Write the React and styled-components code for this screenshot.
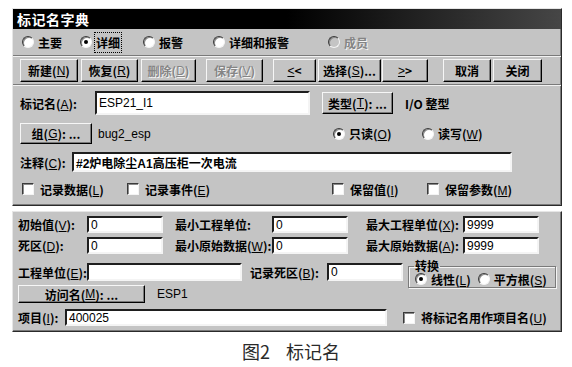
import React from 'react';
import styled, { createGlobalStyle } from 'styled-components';

const GlobalStyle = createGlobalStyle`
  html, body {
    margin: 0;
    padding: 0;
    background: #ffffff;
  }
  body {
    font-family: "Liberation Sans", "Noto Sans CJK SC", sans-serif;
    font-size: 12px;
    color: #000;
  }
`;

const Page = styled.div`
  width: 572px;
  height: 367px;
  padding: 8px 0 0 12px;
  box-sizing: border-box;
  overflow: hidden;
`;

const Panel = styled.div`
  width: 550px;
  box-sizing: border-box;
  background: #c4c4c4;
  border: 1px solid;
  border-color: #e6e6e6 #2a2a2a #2a2a2a #e6e6e6;
  box-shadow: inset -1px -1px #7a7a7a;
  padding-bottom: ${p => p.$pb || 0}px;
  margin-top: ${p => p.$mt || 0}px;
`;

const TitleBar = styled.div`
  height: 20px;
  display: flex;
  align-items: center;
  padding-left: 4px;
  background: linear-gradient(90deg, #000 0%, #000 50%, #464646 100%);
  color: #fff;
  font-family: "Noto Sans CJK SC", sans-serif;
  font-weight: 700;
  font-size: 14px;
  letter-spacing: 0.5px;
`;

const Row = styled.div`
  display: flex;
  align-items: center;
  height: ${p => p.$h}px;
  margin-top: ${p => p.$mt || 0}px;
  padding-left: ${p => p.$pl || 0}px;
`;

const Separator = styled.div`
  height: 0;
  border-top: 1px solid #7a7a7a;
  border-bottom: 1px solid #f2f2f2;
  margin-top: ${p => p.$mt || 0}px;
`;

const Text = styled.span`
  display: inline-block;
  flex-shrink: 0;
  white-space: nowrap;
  width: ${p => (p.$w ? `${p.$w}px` : 'auto')};
  margin-left: ${p => p.$ml || 0}px;
  font-family: ${p => (p.$latin ? '"Liberation Sans", sans-serif' : '"Noto Sans CJK SC", sans-serif')};
  font-weight: ${p => (p.$latin ? 400 : 700)};
  font-size: 12px;
  color: ${p => (p.$disabled ? '#858585' : '#000')};
  text-shadow: ${p => (p.$disabled ? '1px 1px #f4f4f4' : 'none')};
  outline: ${p => (p.$focus ? '1px dotted #000' : 'none')};
  outline-offset: 1px;

  u {
    font-family: "Liberation Sans", sans-serif;
    font-weight: 400;
  }
`;

const Input = styled.div`
  flex-shrink: 0;
  display: flex;
  align-items: center;
  box-sizing: border-box;
  width: ${p => p.$w}px;
  height: ${p => p.$h || 18}px;
  margin-left: ${p => p.$ml || 0}px;
  padding-left: 2px;
  background: #fff;
  border: 2px solid;
  border-color: #1e1e1e #f4f4f4 #f4f4f4 #1e1e1e;
  font-family: "Liberation Sans", "Noto Sans CJK SC", sans-serif;
  font-weight: ${p => (p.$cjk ? 700 : 400)};
  font-size: 12px;
  white-space: nowrap;
  overflow: hidden;
`;

const Button = styled.div`
  flex-shrink: 0;
  display: flex;
  align-items: center;
  justify-content: center;
  box-sizing: border-box;
  width: ${p => p.$w}px;
  height: ${p => p.$h || 23}px;
  margin-left: ${p => p.$ml || 0}px;
  background: #c4c4c4;
  border: 1px solid;
  border-color: #f6f6f6 #000 #000 #f6f6f6;
  box-shadow: inset -1px -1px #7a7a7a;
  font-family: "Noto Sans CJK SC", sans-serif;
  font-weight: 700;
  font-size: 12px;
  white-space: nowrap;
  color: ${p => (p.$disabled ? '#858585' : '#000')};
  text-shadow: ${p => (p.$disabled ? '1px 1px #f4f4f4' : 'none')};

  u {
    font-family: "Liberation Sans", sans-serif;
    font-weight: 400;
  }
`;

const Circle = styled.span`
  position: relative;
  flex-shrink: 0;
  width: 12px;
  height: 12px;
  box-sizing: border-box;
  border-radius: 50%;
  border: 1px solid;
  border-color: #3a3a3a #f4f4f4 #f4f4f4 #3a3a3a;
  background: ${p => (p.$disabled ? '#c4c4c4' : '#fff')};
  box-shadow: inset 1px 1px #8a8a8a;
  margin-right: 4px;

  &::after {
    content: '';
    display: ${p => (p.$on ? 'block' : 'none')};
    position: absolute;
    left: 3px;
    top: 3px;
    width: 4px;
    height: 4px;
    border-radius: 50%;
    background: #000;
  }
`;

const Box = styled.span`
  flex-shrink: 0;
  width: 12px;
  height: 12px;
  box-sizing: border-box;
  border: 1px solid;
  border-color: #3a3a3a #f4f4f4 #f4f4f4 #3a3a3a;
  box-shadow: inset 1px 1px #8a8a8a;
  background: #fff;
  margin-right: 6px;
`;

const Option = styled.span`
  display: flex;
  align-items: center;
  flex-shrink: 0;
  width: ${p => (p.$w ? `${p.$w}px` : 'auto')};
  margin-left: ${p => p.$ml || 0}px;
`;

const Radio = ({ on, disabled, focus, w, ml, children }) => (
  <Option $w={w} $ml={ml}>
    <Circle $on={on} $disabled={disabled} />
    <Text $disabled={disabled} $focus={focus}>{children}</Text>
  </Option>
);

const Check = ({ w, ml, children }) => (
  <Option $w={w} $ml={ml}>
    <Box />
    <Text>{children}</Text>
  </Option>
);

const Split = styled.div`
  display: flex;
  align-items: flex-start;
  margin-top: ${p => p.$mt || 0}px;
`;

const Column = styled.div`
  display: flex;
  flex-direction: column;
`;

const Group = styled.fieldset`
  box-sizing: border-box;
  width: 148px;
  height: 28px;
  margin: -3px 0 0 5px;
  padding: 0 0 1px 6px;
  border: 1px solid #7a7a7a;
  box-shadow: 1px 1px #f4f4f4, inset 1px 1px #f4f4f4;
  display: flex;
  align-items: center;
`;

const Legend = styled.legend`
  padding: 0 1px;
  margin-left: -1px;
  font-family: "Noto Sans CJK SC", sans-serif;
  font-weight: 700;
  font-size: 12px;
  line-height: 12px;
`;

const Caption = styled.div`
  width: 550px;
  margin-top: 6px;
  text-align: center;
  font-family: "Noto Sans CJK SC", sans-serif;
  font-size: 18px;
  color: #2a2a2a;
  padding-left: 4px;
`;

const K = ({ children }) => <u>{children}</u>;

export default function App() {
  return (
    <Page>
      <GlobalStyle />
      <Panel $pb={7}>
        <TitleBar>标记名字典</TitleBar>
        <Row $h={26} $pl={9}>
          <Radio w={58}>主要</Radio>
          <Radio w={63} on focus>详细</Radio>
          <Radio w={70}>报警</Radio>
          <Radio w={115}>详细和报警</Radio>
          <Radio disabled>成员</Radio>
        </Row>
        <Separator />
        <Row $h={23} $mt={2} $pl={7}>
          <Button $w={58}>新建(<K>N</K>)</Button>
          <Button $w={57} $ml={3}>恢复(<K>R</K>)</Button>
          <Button $w={55} $ml={3} $disabled>删除(<K>D</K>)</Button>
          <Button $w={57} $ml={10} $disabled>保存(<K>V</K>)</Button>
          <Button $w={43} $ml={10}><K>&lt;</K>&lt;</Button>
          <Button $w={63} $ml={2}>选择(<K>S</K>)...</Button>
          <Button $w={46} $ml={1}><K>&gt;</K>&gt;</Button>
          <Button $w={48} $ml={15}>取消</Button>
          <Button $w={49} $ml={2}>关闭</Button>
        </Row>
        <Separator $mt={2} />
        <Row $h={24} $mt={5} $pl={7}>
          <Text $w={75}>标记名(<K>A</K>):</Text>
          <Input $w={215} $h={24}>ESP21_I1</Input>
          <Button $w={71} $h={22} $ml={12}>类型(<K>T</K>): ...</Button>
          <Text $ml={12}>I/O 整型</Text>
        </Row>
        <Row $h={21} $mt={8} $pl={7}>
          <Button $w={72} $h={21}>组(<K>G</K>): ...</Button>
          <Text $latin $ml={6} $w={235}>bug2_esp</Text>
          <Radio on w={89}>只读(<K>O</K>)</Radio>
          <Radio>读写(<K>W</K>)</Radio>
        </Row>
        <Row $h={20} $mt={8} $pl={7}>
          <Text $w={52}>注释(<K>C</K>):</Text>
          <Input $w={440} $h={20} $cjk>#2炉电除尘A1高压柜一次电流</Input>
        </Row>
        <Row $h={18} $mt={8} $pl={9}>
          <Check w={105}>记录数据(<K>L</K>)</Check>
          <Check w={205}>记录事件(<K>E</K>)</Check>
          <Check w={95}>保留值(<K>I</K>)</Check>
          <Check>保留参数(<K>M</K>)</Check>
        </Row>
      </Panel>

      <Panel $mt={5} $pb={5}>
        <Row $h={17} $mt={4} $pl={5}>
          <Text $w={69}>初始值(<K>V</K>):</Text>
          <Input $w={76} $h={17}>0</Input>
          <Text $w={97} $ml={12}>最小工程单位:</Text>
          <Input $w={76} $h={17}>0</Input>
          <Text $w={97} $ml={18}>最大工程单位(<K>X</K>):</Text>
          <Input $w={76} $h={17}>9999</Input>
        </Row>
        <Row $h={17} $mt={4} $pl={5}>
          <Text $w={69}>死区(<K>D</K>):</Text>
          <Input $w={76} $h={17}>0</Input>
          <Text $w={97} $ml={12}>最小原始数据(<K>W</K>):</Text>
          <Input $w={76} $h={17}>0</Input>
          <Text $w={97} $ml={18}>最大原始数据(<K>A</K>):</Text>
          <Input $w={76} $h={17}>9999</Input>
        </Row>
        <Split $mt={9}>
          <Column>
            <Row $h={18} $pl={5}>
              <Text $w={69}>工程单位(<K>E</K>):</Text>
              <Input $w={155} $h={18} />
              <Text $w={77} $ml={8}>记录死区(<K>B</K>):</Text>
              <Input $w={76} $h={18}>0</Input>
            </Row>
            <Row $h={18} $mt={4} $pl={5}>
              <Button $w={127} $h={18}>访问名(<K>M</K>): ...</Button>
              <Text $latin $ml={12}>ESP1</Text>
            </Row>
          </Column>
          <Group>
            <Legend>转换</Legend>
            <Radio on>线性(<K>L</K>)</Radio>
            <Radio ml={7}>平方根(<K>S</K>)</Radio>
          </Group>
        </Split>
        <Row $h={17} $mt={6} $pl={5}>
          <Text $w={47}>项目(<K>I</K>):</Text>
          <Input $w={322} $h={17}>400025</Input>
          <Check ml={16}>将标记名用作项目名(<K>U</K>)</Check>
        </Row>
      </Panel>

      <Caption>图2&nbsp;&nbsp;&nbsp;&nbsp;标记名</Caption>
    </Page>
  );
}
